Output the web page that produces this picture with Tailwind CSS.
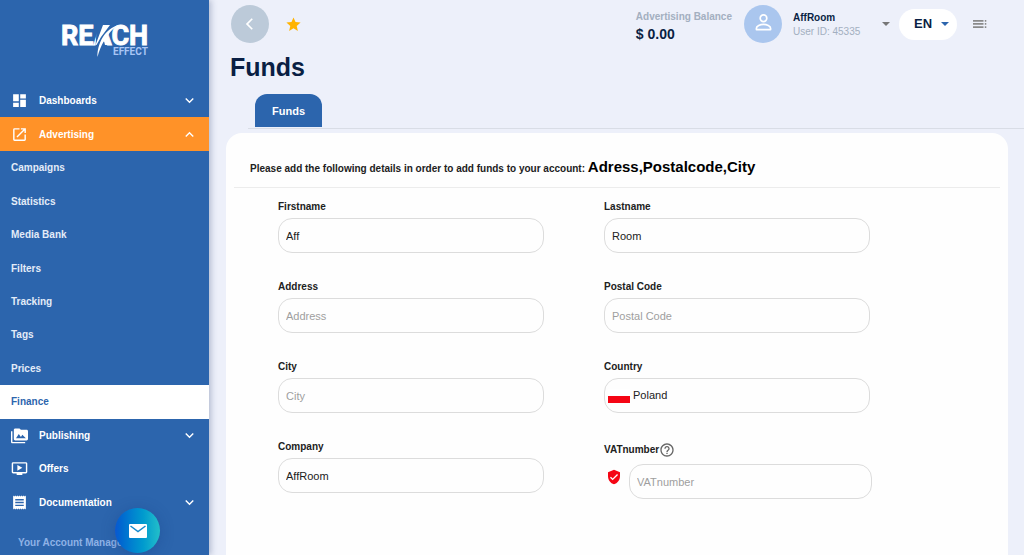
<!DOCTYPE html>
<html lang="en">

<head>
    <meta charset="UTF-8">
    <meta name="viewport" content="width=device-width, initial-scale=1.0">
    <title>Reach Effect - Funds</title>
    <script src="https://cdn.jsdelivr.net/npm/@tailwindcss/browser@4"></script>
</head>

<body class="flex min-h-screen bg-[#edf0fa] font-['Liberation_Sans',Arial,sans-serif] text-[#0a1f44]">
    <!-- Sidebar -->
    <aside class="relative z-10 w-[209px] shrink-0 bg-[#2c65ad] text-white shadow-[2px_0_6px_rgba(40,60,110,0.3)]">
        <a href="#" class="flex h-[84px] items-start pt-5 pl-[60px]" aria-label="Reach Effect">
            <svg width="92" height="38" viewBox="0 0 92 38" fill="#fff">
                <g font-family="Roboto, sans-serif" font-weight="700">
                    <text x="1" y="25" font-size="27" stroke="#fff" stroke-width="0.9">REACH</text>
                    <text x="53" y="35" font-size="10" fill="#a9c6f5">EFFECT</text>
                </g>
                <path d="M37 3H58L52 8L46 17L40 27H35.500Z" fill="#2c65ad" />
                <path d="M43 5H50L41 17L36.500 25H35.500Z" />
                <path d="M37.500 37C37 24 45 8 59 5C52 9 49 13 47.500 17L50 25H45L44 21C41 26 39 31 37.500 37Z" />
            </svg>
        </a>
        <nav class="grid h-[435px] auto-rows-fr text-[10px] font-bold">
            <a href="#" class="flex items-center pr-[11px] pl-[11px]">
                <svg class="size-[17px]" viewBox="0 0 24 24" fill="currentColor"><path d="M3 13h8V3H3v10zm0 8h8v-6H3v6zm10 0h8V11h-8v10zm0-18v6h8V3h-8z" /></svg>
                <span class="ml-[11px] grow">Dashboards</span>
                <svg class="size-[17px]" viewBox="0 0 24 24" fill="currentColor"><path d="M7.410 8.590 12 13.170l4.590-4.580L18 10l-6 6-6-6z" /></svg>
            </a>
            <a href="#" class="flex items-center bg-[#ff9228] pr-[11px] pl-[11px]">
                <svg class="size-[17px]" viewBox="0 0 24 24" fill="currentColor"><path d="M19 19H5V5h7V3H5a2 2 0 0 0-2 2v14a2 2 0 0 0 2 2h14c1.100 0 2-.9 2-2v-7h-2v7zM14 3v2h3.590l-9.830 9.830 1.410 1.410L19 6.410V10h2V3h-7z" /></svg>
                <span class="ml-[11px] grow">Advertising</span>
                <svg class="size-[17px]" viewBox="0 0 24 24" fill="currentColor"><path d="M12 8l-6 6 1.410 1.410L12 10.830l4.590 4.580L18 14z" /></svg>
            </a>
            <a href="#" class="flex items-center pl-[11px] text-[#e3ecf8]">Campaigns</a>
            <a href="#" class="flex items-center pl-[11px] text-[#e3ecf8]">Statistics</a>
            <a href="#" class="flex items-center pl-[11px] text-[#e3ecf8]">Media Bank</a>
            <a href="#" class="flex items-center pl-[11px] text-[#e3ecf8]">Filters</a>
            <a href="#" class="flex items-center pl-[11px] text-[#e3ecf8]">Tracking</a>
            <a href="#" class="flex items-center pl-[11px] text-[#e3ecf8]">Tags</a>
            <a href="#" class="flex items-center pl-[11px] text-[#e3ecf8]">Prices</a>
            <a href="#" class="flex items-center bg-white pl-[11px] text-[#2c65ad]" aria-current="page">Finance</a>
            <a href="#" class="flex items-center pr-[11px] pl-[11px]">
                <svg class="size-[17px]" viewBox="0 0 24 22" fill="currentColor"><path d="M2 5H0v15c0 1.100.9 2 2 2h18v-2H2V5zm20-2h-8l-2-2H6c-1.100 0-2 .9-2 2v13c0 1.100.9 2 2 2h16c1.100 0 2-.9 2-2V5c0-1.100-.9-2-2-2zM7 15l4-6 3 4 2-3 5 5H7z" /></svg>
                <span class="ml-[11px] grow">Publishing</span>
                <svg class="size-[17px]" viewBox="0 0 24 24" fill="currentColor"><path d="M7.410 8.590 12 13.170l4.590-4.580L18 10l-6 6-6-6z" /></svg>
            </a>
            <a href="#" class="flex items-center pr-[11px] pl-[11px]">
                <svg class="size-[17px]" viewBox="0 0 24 24" fill="currentColor"><path d="M21 3H3a2 2 0 0 0-2 2v12c0 1.100.9 2 2 2h5v2h8v-2h5c1.100 0 2-.9 2-2V5c0-1.100-.9-2-2-2zm0 14H3V5h18v12zM9 7v8l7-4z" /></svg>
                <span class="ml-[11px] grow">Offers</span>
            </a>
            <a href="#" class="flex items-center pr-[11px] pl-[11px]">
                <svg class="size-[17px]" viewBox="0 0 24 24" fill="currentColor"><path d="M18 17H6v-2h12v2zm0-4H6v-2h12v2zm0-4H6V7h12v2zM3 22l1.500-1.500L6 22l1.500-1.500L9 22l1.500-1.500L12 22l1.500-1.500L15 22l1.500-1.500L18 22l1.500-1.500L21 22V2l-1.500 1.500L18 2l-1.500 1.500L15 2l-1.500 1.500L12 2l-1.500 1.500L9 2 7.500 3.500 6 2 4.500 3.500 3 2v20z" /></svg>
                <span class="ml-[11px] grow">Documentation</span>
                <svg class="size-[17px]" viewBox="0 0 24 24" fill="currentColor"><path d="M7.410 8.590 12 13.170l4.590-4.580L18 10l-6 6-6-6z" /></svg>
            </a>
        </nav>
        <p class="pt-4 pl-[18px] text-[10px] leading-4 font-bold text-[#8fb2e6]">Your Account Manager</p>
    </aside>

    <!-- Chat button -->
    <button type="button" aria-label="Send a message"
        class="fixed bottom-[2px] left-[115px] z-20 flex size-[45px] items-center justify-center rounded-full bg-linear-to-r from-[#0b57d0] to-[#22bfc9] shadow-[0_2px_14px_rgba(20,60,130,0.35)]">
        <svg width="18" height="14" viewBox="0 0 18 14"><rect width="18" height="14" rx="1" fill="#fff" /><path d="M1.500 2 9 7.500 16.500 2" fill="none" stroke="#1689cd" stroke-width="1.500" /></svg>
    </button>

    <div class="flex min-w-0 grow flex-col">
        <header class="flex items-center pt-[5px] pr-[37px] pl-[22px]">
            <button type="button" aria-label="Back" class="flex size-[38px] items-center justify-center rounded-full bg-[#bccad9]">
                <svg class="size-5" viewBox="0 0 24 24" fill="#fff"><path d="M15.410 6.410 14 5l-7 7 7 7 1.410-1.410L9.830 12z" /></svg>
            </button>
            <button type="button" aria-label="Favourite" class="ml-4">
                <svg class="size-[17px]" viewBox="0 0 24 24" fill="#ffb300"><path d="M12 17.270 18.180 21l-1.640-7.030L22 9.240l-7.190-.61L12 2 9.190 8.630 2 9.240l5.460 4.730L5.820 21z" /></svg>
            </button>
            <div class="ml-auto pt-1">
                <p class="text-[10px] leading-4 font-bold text-[#a3afc0]">Advertising Balance</p>
                <p class="text-sm leading-[18px] font-bold">$ 0.00</p>
            </div>
            <div class="ml-3 flex size-[38px] items-center justify-center rounded-full bg-[#aac6ee]">
                <svg class="mb-1 size-[17px]" viewBox="0 0 18 18" fill="none" stroke="#fff" stroke-width="1.800"><circle cx="9" cy="4.500" r="3.500" /><path d="M1.500 16.500v-1.500c0-2.500 4-4 7.500-4s7.500 1.500 7.500 4v1.500z" stroke-linejoin="round" /></svg>
            </div>
            <button type="button" class="ml-[11px] flex w-[97px] items-center justify-between text-left">
                <span class="pt-[2px] text-[10px] leading-[14px]">
                    <span class="block font-bold">AffRoom</span>
                    <span class="block text-[#a3afc0]">User ID: 45335</span>
                </span>
                <svg width="8" height="4" viewBox="0 0 8 4" fill="#777"><path d="M0 0h8L4 4z" /></svg>
            </button>
            <button type="button" aria-label="Language: EN" class="ml-[9px] flex h-[31px] w-[58px] items-center justify-between rounded-full bg-white pr-2 pl-[15px] text-[13px] font-bold">
                EN
                <svg width="8" height="4" viewBox="0 0 8 4" fill="#2c65ad"><path d="M0 0h8L4 4z" /></svg>
            </button>
            <button type="button" aria-label="Menu" class="ml-4">
                <svg width="14" height="8" viewBox="0 0 14 8" fill="#8a8a8a"><path d="M0 0h10.500v1.700H0zM0 3.100h10.500v1.700H0zM0 6.200h10.500v1.700H0zM11.800 0h1.500v1.700h-1.500zM11.800 3.100h1.500v1.700h-1.500zM11.800 6.200h1.500v1.700h-1.500z" /></svg>
            </button>
        </header>

        <h1 class="mt-2 pl-[21px] text-[25px] leading-8 font-bold">Funds</h1>

        <div class="mt-[11px] ml-[39px] flex border-b border-[#d9dde6] pb-px pl-[7px]">
            <button type="button" class="h-[33px] w-[67px] rounded-t-xl bg-[#2c65ad] pt-px text-[11px] font-bold text-white">Funds</button>
        </div>

        <main class="mt-1 mr-4 ml-[17px] grow rounded-t-2xl bg-[#fefefe] pt-6 text-[#212121]">
            <p class="mx-2 border-b border-[#ececec] pb-[6px] pl-4 text-[10px] leading-6 font-bold">
                Please add the following details in order to add funds to your account:
                <span class="text-[15px] leading-none text-black">Adress,Postalcode,City</span>
            </p>

            <form class="grid grid-cols-2 gap-x-[60px] gap-y-[26px] pt-[11px] pr-[138px] pl-[52px] text-[11px]">
                <div>
                    <label for="firstname" class="mb-[3px] block text-[10px] leading-4 font-bold">Firstname</label>
                    <input id="firstname" type="text" value="Aff" placeholder="Firstname"
                        class="block h-[35px] w-full rounded-[14px] border border-[#dcdcdc] px-[7px] placeholder:text-[#9e9e9e]" />
                </div>
                <div>
                    <label for="lastname" class="mb-[3px] block text-[10px] leading-4 font-bold">Lastname</label>
                    <input id="lastname" type="text" value="Room" placeholder="Lastname"
                        class="block h-[35px] w-full rounded-[14px] border border-[#dcdcdc] px-[7px] placeholder:text-[#9e9e9e]" />
                </div>
                <div>
                    <label for="address" class="mb-[3px] block text-[10px] leading-4 font-bold">Address</label>
                    <input id="address" type="text" placeholder="Address"
                        class="block h-[35px] w-full rounded-[14px] border border-[#dcdcdc] px-[7px] placeholder:text-[#9e9e9e]" />
                </div>
                <div>
                    <label for="postal" class="mb-[3px] block text-[10px] leading-4 font-bold">Postal Code</label>
                    <input id="postal" type="text" placeholder="Postal Code"
                        class="block h-[35px] w-full rounded-[14px] border border-[#dcdcdc] px-[7px] placeholder:text-[#9e9e9e]" />
                </div>
                <div>
                    <label for="city" class="mb-[3px] block text-[10px] leading-4 font-bold">City</label>
                    <input id="city" type="text" placeholder="City"
                        class="block h-[35px] w-full rounded-[14px] border border-[#dcdcdc] px-[7px] placeholder:text-[#9e9e9e]" />
                </div>
                <div>
                    <label for="country" class="mb-[3px] block text-[10px] leading-4 font-bold">Country</label>
                    <div class="relative">
                        <select id="country" class="block h-[35px] w-full appearance-none rounded-[14px] border border-[#dcdcdc] px-7">
                            <option>Poland</option>
                        </select>
                        <!-- Polish flag -->
                        <svg class="pointer-events-none absolute top-[11px] left-1" width="22" height="14" viewBox="0 0 22 14"><path fill="#fff" d="M0 0h22v7H0z" /><path fill="#f50514" d="M0 7h22v7H0z" /></svg>
                    </div>
                </div>
                <div>
                    <label for="company" class="mb-[3px] block text-[10px] leading-4 font-bold">Company</label>
                    <input id="company" type="text" value="AffRoom" placeholder="Company"
                        class="block h-[35px] w-full rounded-[14px] border border-[#dcdcdc] px-[7px] placeholder:text-[#9e9e9e]" />
                </div>
                <div>
                    <div class="mb-[3px] flex h-[22px] items-center">
                        <label for="vat" class="text-[10px] leading-4 font-bold">VATnumber</label>
                        <svg class="size-4" viewBox="0 0 24 24" fill="#666"><path d="M11 18h2v-2h-2v2zm1-16C6.480 2 2 6.480 2 12s4.480 10 10 10 10-4.480 10-10S17.520 2 12 2zm0 18c-4.410 0-8-3.590-8-8s3.590-8 8-8 8 3.590 8 8-3.590 8-8 8zm0-14c-2.210 0-4 1.790-4 4h2c0-1.100.9-2 2-2s2 .9 2 2c0 2-3 1.750-3 5h2c0-2.250 3-2.500 3-5 0-2.210-1.790-4-4-4z" /></svg>
                    </div>
                    <div class="-mr-[2px] flex pl-[2px]">
                        <svg class="mt-[5px] mr-[7px] size-4 shrink-0" viewBox="0 0 24 24" fill="#f50514"><path d="M12 1 3 5v6c0 5.550 3.840 10.740 9 12 5.160-1.260 9-6.450 9-12V5l-9-4zm-2 16-4-4 1.410-1.410L10 14.170l6.590-6.590L18 9l-8 8z" /></svg>
                        <input id="vat" type="text" placeholder="VATnumber"
                            class="block h-[35px] min-w-0 grow rounded-[14px] border border-[#dcdcdc] px-[7px] placeholder:text-[#9e9e9e]" />
                    </div>
                </div>
            </form>
        </main>
    </div>
</body>

</html>
